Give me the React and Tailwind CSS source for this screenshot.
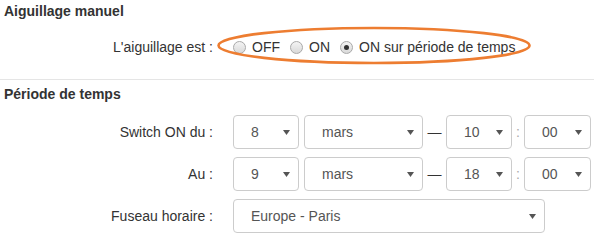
import React from 'react';

function Radio({ checked, label }) {
  return (
    <label className="flex items-center gap-[6px]">
      <span className="flex h-[13px] w-[13px] items-center justify-center rounded-full border border-[#a9a9a9] bg-gradient-to-b from-[#f4f4f4] to-[#d9d9d9]">
        {checked && <span className="h-[5px] w-[5px] rounded-full bg-[#333]" />}
      </span>
      <span>{label}</span>
    </label>
  );
}

function Select({ value, width }) {
  return (
    <div className={`flex h-[34px] ${width} items-center justify-between rounded-[4px] border border-[#ccc] bg-white pl-[17px] pr-[8px] text-[#555]`}>
      <span>{value}</span>
      <svg width="7" height="5" viewBox="0 0 7 5">
        <path d="M0 0h7L3.5 5z" fill="#555" />
      </svg>
    </div>
  );
}

function DateRow({ day, month, hour, minute }) {
  return (
    <div className="flex items-center">
      <Select value={day} width="w-[66px]" />
      <div className="ml-[5px]">
        <Select value={month} width="w-[119px]" />
      </div>
      <span className="w-[23px] text-center text-[#333]">—</span>
      <Select value={hour} width="w-[66px]" />
      <span className="w-[12px] text-center text-[#aaa]">:</span>
      <Select value={minute} width="w-[67px]" />
    </div>
  );
}

export default function App() {
  return (
    <div className="relative h-[238px] w-[594px] overflow-hidden bg-white font-['Liberation_Sans',Arial,sans-serif] text-[14px] leading-5 text-[#333]">
      <h3 className="pl-1 pt-[1px] font-bold">Aiguillage manuel</h3>

      <div className="mt-4 grid grid-cols-[213px_1fr] gap-x-5">
        <div className="text-right">L'aiguillage est :</div>
        <div className="flex items-center gap-[10px]">
          <Radio label="OFF" />
          <Radio label="ON" />
          <Radio checked label="ON sur période de temps" />
        </div>
      </div>

      <svg className="pointer-events-none absolute left-[216px] top-[26px]" width="318" height="40" viewBox="0 0 318 40">
        <ellipse cx="158" cy="19.5" rx="155.5" ry="17.5" fill="none" stroke="#ed7d31" strokeWidth="2.6" />
      </svg>

      <div className="mt-[22px] border-t border-[#e5e5e5]" />

      <h3 className="pl-1 pt-[4px] font-bold">Période de temps</h3>

      <div className="mt-[11px] grid grid-cols-[213px_1fr] items-center gap-x-5 gap-y-2">
        <div className="text-right">Switch ON du :</div>
        <DateRow day="8" month="mars" hour="10" minute="00" />

        <div className="text-right">Au :</div>
        <DateRow day="9" month="mars" hour="18" minute="00" />

        <div className="text-right">Fuseau horaire :</div>
        <Select value="Europe - Paris" width="w-[312px]" />
      </div>
    </div>
  );
}
